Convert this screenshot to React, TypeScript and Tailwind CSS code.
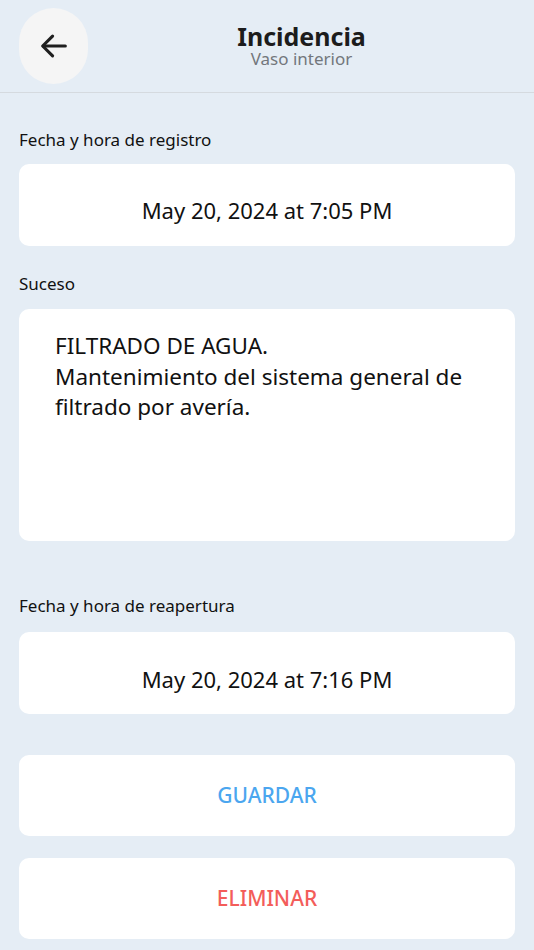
import React from "react";

const font = { fontFamily: '"Noto Sans", "Open Sans", sans-serif' };

export default function App() {
  return (
    <div className="w-[534px] h-[950px] bg-[#e5edf5] text-[#111] overflow-hidden" style={font}>
      <header className="relative h-[93px] border-b border-[#d5dadf] flex items-center">
        <button className="ml-[19px] w-[69px] h-[76px] rounded-full bg-[#f5f5f5] flex items-center justify-center">
          <svg width="34" height="34" viewBox="0 0 24 24" fill="none" stroke="#1f1f1f" strokeWidth="2.2" strokeLinecap="round" strokeLinejoin="round">
            <path d="M20 12H4.5" />
            <path d="M11 5l-7 7 7 7" />
          </svg>
        </button>
        <div className="absolute left-[180px] top-[22px] w-[243px] flex flex-col items-center">
          <div className="text-[25px] font-bold leading-[28px] text-[#1c1c1c]">Incidencia</div>
          <div className="text-[17px] leading-[17px] text-[#73777c]">Vaso interior</div>
        </div>
      </header>
      <main className="px-[19px]">
        <div className="pt-[35px] h-[71px] text-[17px] leading-[24px]">Fecha y hora de registro</div>
        <div className="h-[82px] pt-[10px] rounded-[10px] bg-white flex items-center justify-center text-[22px]">
          May 20, 2024 at 7:05 PM
        </div>
        <div className="pt-[26px] h-[63px] text-[17px] leading-[24px]">Suceso</div>
        <div className="h-[232px] rounded-[10px] bg-white pl-[36px] pr-[24px] pt-[22px] text-[22.5px] leading-[30.5px]">
          FILTRADO DE AGUA.
          <br />
          Mantenimiento del sistema general de filtrado por avería.
        </div>
        <div className="pt-[53px] h-[91px] text-[17px] leading-[24px]">Fecha y hora de reapertura</div>
        <div className="h-[82px] pt-[12px] rounded-[10px] bg-white flex items-center justify-center text-[22px]">
          May 20, 2024 at 7:16 PM
        </div>
        <button className="mt-[41px] w-full h-[81px] rounded-[10px] bg-white flex items-center justify-center text-[21px] font-medium text-[#4ba6ef]">
          GUARDAR
        </button>
        <button className="mt-[22px] w-full h-[81px] rounded-[10px] bg-white flex items-center justify-center text-[21px] font-medium text-[#f35d5a]">
          ELIMINAR
        </button>
      </main>
    </div>
  );
}
